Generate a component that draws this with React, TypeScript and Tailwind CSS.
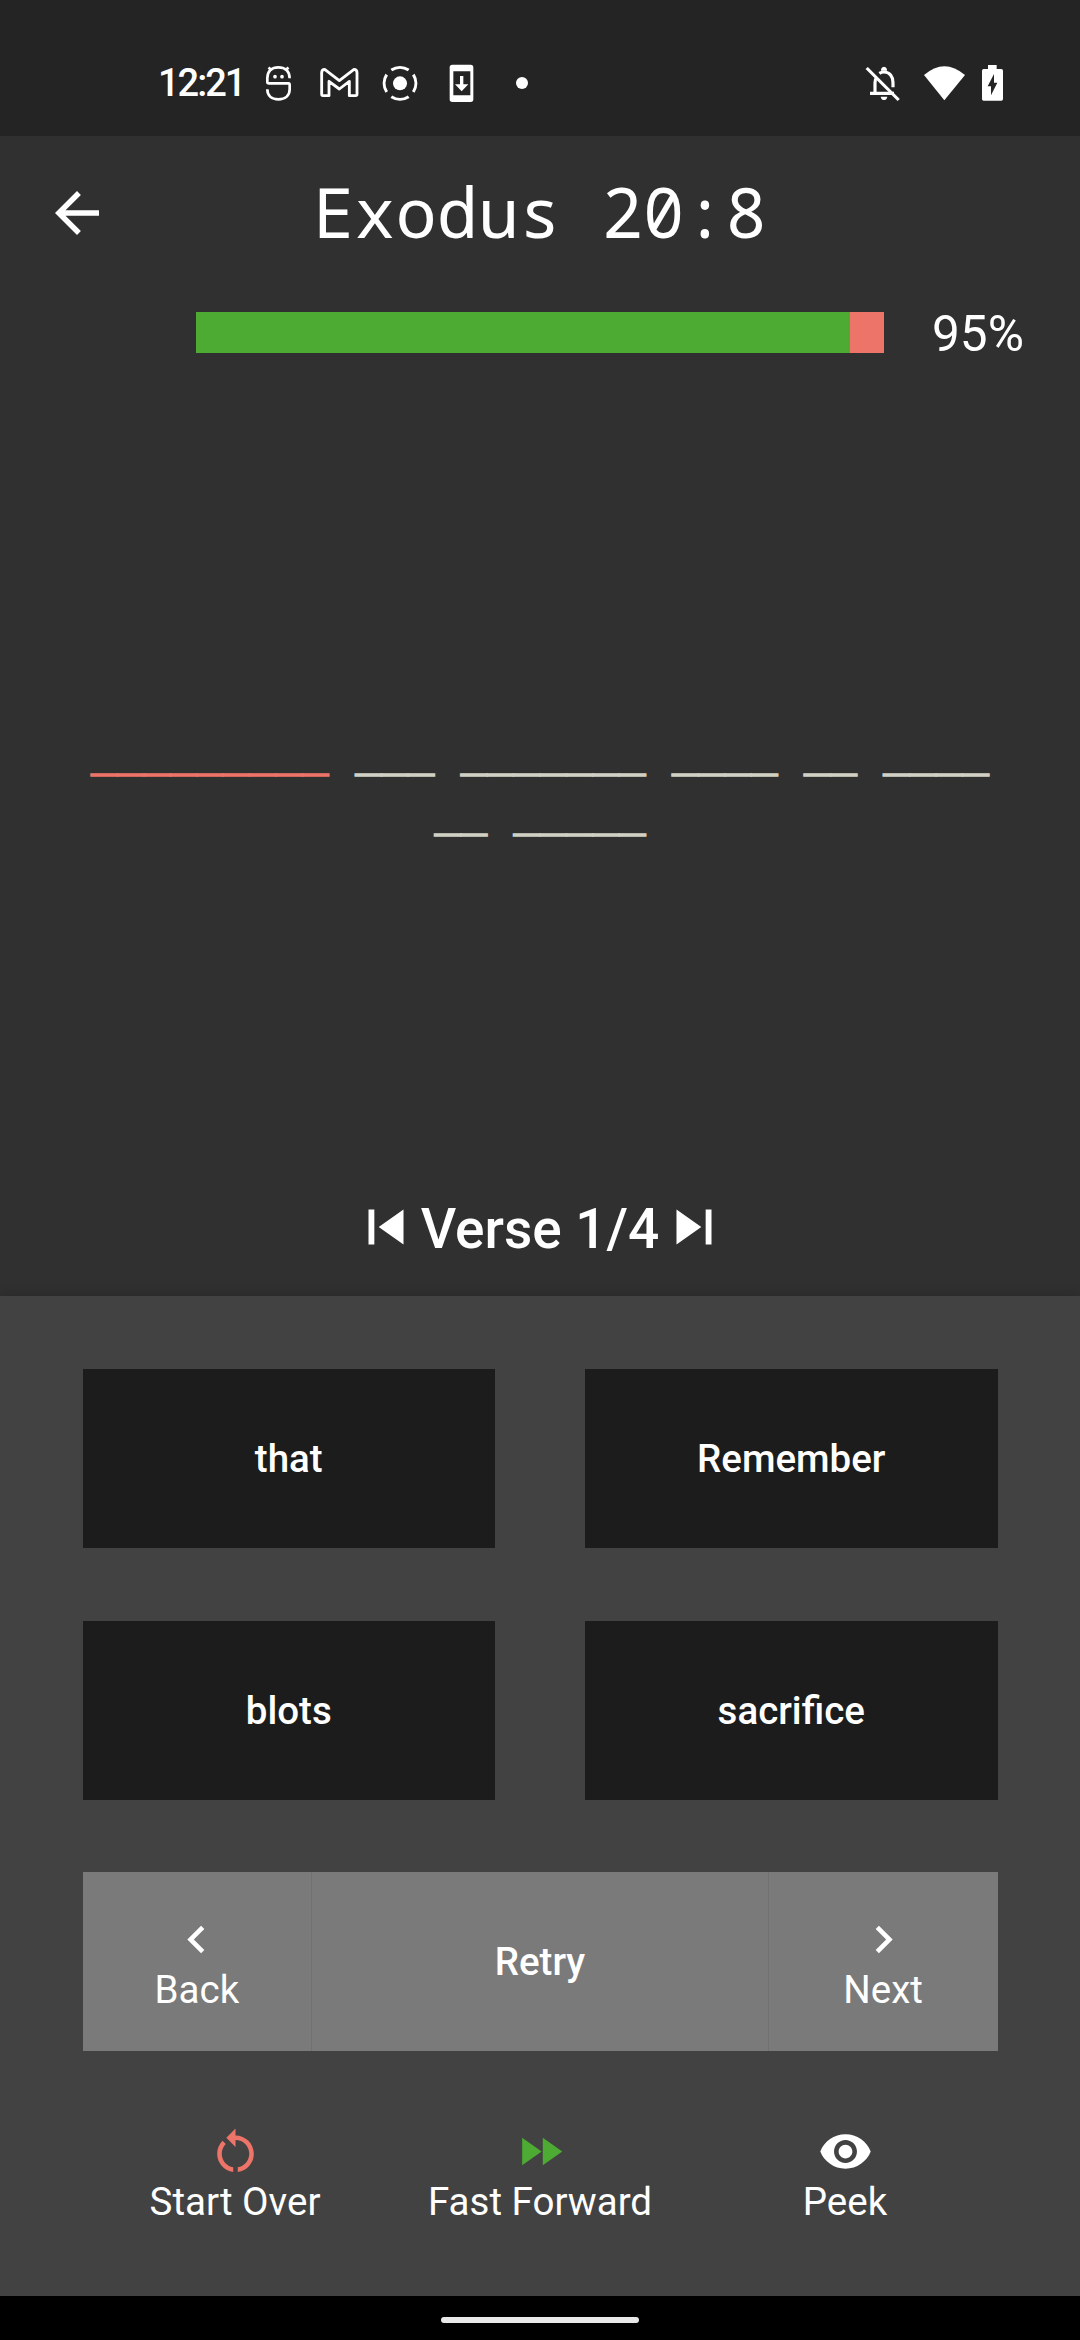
import React from "react";

const FILL = "currentColor";

function Icon({ d, className }: { d: string; className: string }) {
  return (
    <svg viewBox="0 0 24 24" className={className} fill={FILL} aria-hidden="true">
      <path d={d} />
    </svg>
  );
}

const ICONS = {
  back: "M20 11H7.83l5.59-5.59L12 4l-8 8 8 8 1.41-1.41L7.83 13H20v-2z",
  previous: "M6 6h2v12H6zm3.5 6l8.5 6V6z",
  next: "M6 18l8.5-6L6 6v12zM16 6v12h2V6h-2z",
  left: "M15.41 7.41L14 6l-6 6 6 6 1.41-1.41L10.83 12z",
  right: "M10 6L8.59 7.41 13.17 12l-4.58 4.59L10 18l6-6z",
  restart:
    "M12 5V2L8 6l4 4V7c3.31 0 6 2.69 6 6 0 2.97-2.17 5.43-5 5.91v2.02c3.95-.49 7-3.85 7-7.93 0-4.42-3.58-8-8-8zM6 13c0-1.65.67-3.15 1.76-4.24L6.34 7.34C4.9 8.79 4 10.79 4 13c0 4.08 3.05 7.44 7 7.93v-2.02c-2.83-.48-5-2.94-5-5.91z",
  forward: "M4 18l8.5-6L4 6v12zm9-12v12l8.5-6L13 6z",
  eye: "M12 4.5C7 4.5 2.73 7.61 1 12c1.73 4.39 6 7.5 11 7.5s9.27-3.11 11-7.5c-1.73-4.39-6-7.5-11-7.5zM12 17c-2.76 0-5-2.24-5-5s2.24-5 5-5 5 2.24 5 5-2.24 5-5 5zm0-8c-1.66 0-3 1.34-3 3s1.34 3 3 3 3-1.34 3-3-1.34-3-3-3z",
};

function StatusBar() {
  return (
    <header className="flex h-[136px] shrink-0 items-center bg-[#242424] pt-[30px]">
      <span className="ml-[158px] w-[107px] text-[38px] leading-[40px] font-medium tracking-[-2px]">
        12:21
      </span>
      {/* mascot */}
      <svg viewBox="375 75 81 111" className="h-[37px] w-[27px]" fill="none" stroke={FILL} strokeWidth="8">
        <path d="M382 115C382 93 396 82 415 82S449 93 449 115M382 112V126Q382 130 387 130H446Q449 130 449 136V148C449 168 435 178 415 178S382 168 382 148M386 82L394 92M445 82L437 92" />
        <circle cx="405" cy="110" r="5.5" fill={FILL} stroke="none" />
        <circle cx="426" cy="110" r="5.5" fill={FILL} stroke="none" />
      </svg>
      {/* mail */}
      <svg viewBox="537 75 123 111" className="ml-[27px] h-[37px] w-[41px]" fill="none" stroke={FILL} strokeWidth="8.5" strokeLinejoin="round">
        <path d="M545 98Q545 88 554 88L598 122L642 88Q651 88 651 98V163Q651 167 647 167H628V124L598 147L567 124V167H549Q545 167 545 163Z" />
      </svg>
      {/* casting */}
      <svg viewBox="724 75 114 111" className="ml-[21px] h-[37px] w-[38px]" fill="none" stroke={FILL} strokeWidth="9">
        <circle cx="781" cy="130" r="21" fill={FILL} stroke="none" />
        <path d="M755 90A48 48 0 0 1 807 90M821 104A48 48 0 0 1 821 156M807 170A48 48 0 0 1 755 170M741 156A48 48 0 0 1 741 104" />
      </svg>
      {/* download to phone */}
      <svg viewBox="926 72 75 117" className="ml-[30px] h-[39px] w-[25px]" fill={FILL}>
        <path fillRule="evenodd" d="M936 74H991Q999 74 999 82V178Q999 186 991 186H936Q928 186 928 178V82Q928 74 936 74ZM939 94V166H990V94Z" />
        <path d="M959 108H969V133H984L964 154L944 133H959Z" />
      </svg>
      <span className="ml-[42px] h-3 w-3 rounded-full bg-white" />
      {/* muted bell */}
      <svg viewBox="72 75 114 114" className="mt-px ml-auto h-[38px] w-[38px]" fill="none" stroke={FILL} strokeWidth="9.5">
        <path d="M90 160H162M105 157V128Q105 118 110 113M118 100Q124 96 132 96C149 96 159 110 159 128V142" />
        <path d="M123 92V88Q125 80 132 80T141 88V92Z" fill={FILL} stroke="none" />
        <path d="M122 170H142Q140 180 132 180T122 170Z" fill={FILL} stroke="none" />
        <path d="M80 84L176 180" />
      </svg>
      {/* wifi */}
      <svg viewBox="252 75 123 105" className="ml-[22px] h-[35px] w-[41px]" fill={FILL}>
        <path d="M252 102Q313 49 375 102L313 178Z" />
      </svg>
      {/* charging battery */}
      <svg viewBox="426 75 63 108" className="mr-[77px] ml-[17px] h-[36px] w-[21px]" fill={FILL}>
        <path fillRule="evenodd" d="M444 75H470V87H484Q489 87 489 92V177Q489 182 484 182H431Q426 182 426 177V92Q426 87 431 87H444ZM462 102L443 139H453V166L472 128H462Z" />
      </svg>
    </header>
  );
}

const WORD_LENGTHS = [9, 3, 7, 4, 2, 4, 2, 5];

function VerseBlanks() {
  return (
    <p className="mt-[366px] h-[120px] px-[80px] text-center font-['Liberation_Mono',monospace] text-[44px] leading-[60px] text-[#d0d0c4] [-webkit-text-stroke:1.4px_currentColor]">
      {WORD_LENGTHS.map((n, i) => (
        <React.Fragment key={i}>
          <span className={i === 0 ? "text-[#ed7469]" : ""}>{"_".repeat(n)}</span>{" "}
        </React.Fragment>
      ))}
    </p>
  );
}

function WordButton({ children }: { children: string }) {
  return (
    <button className="flex h-[179px] items-center justify-center bg-[#1c1c1c] pt-px text-[38.5px] font-medium">
      {children}
    </button>
  );
}

function Action({ icon, label, tint }: { icon: string; label: string; tint: string }) {
  return (
    <button className="flex flex-col items-center text-[38.5px] leading-[45px]">
      <Icon d={icon} className={`size-[55px] ${tint}`} />
      {label}
    </button>
  );
}

export default function App() {
  return (
    <div className="flex h-[2340px] w-[1080px] flex-col overflow-hidden bg-[#303030] font-[Roboto,sans-serif] text-white">
      <StatusBar />
      <main className="flex h-[1160px] flex-col">
        <div className="flex h-[154px] items-center pl-[44px]">
          <Icon d={ICONS.back} className="size-[66px]" />
          <h1 className="w-[860px] pb-[3px] text-center font-['Noto_Sans_Mono','DejaVu_Sans_Mono',monospace] text-[68.75px] leading-[80px]">
            Exodus 20:8
          </h1>
        </div>
        <div className="mt-[12px] flex h-[61px] items-center pl-[196px]">
          <div className="flex h-[41px] w-[688px] bg-[#ed7469]">
            <div className="w-[654px] bg-[#4dab33]" />
          </div>
          <span className="ml-[48px] pt-[3px] text-[49.5px] leading-[58px]">95%</span>
        </div>
        <VerseBlanks />
        <div className="mt-auto mb-[34px] flex h-[70px] items-center justify-center text-[55px] font-medium">
          <Icon d={ICONS.previous} className="size-[70px] shrink-0" />
          <span className="flex w-[238px] justify-center pt-[4px] leading-[70px] whitespace-nowrap">Verse 1/4</span>
          <Icon d={ICONS.next} className="size-[70px] shrink-0" />
        </div>
      </main>
      <section className="flex h-[1000px] flex-col bg-[#424242] px-[82.5px] pt-[72.5px] shadow-[0_-2px_10px_rgba(0,0,0,0.15)]">
        <div className="grid grid-cols-2 gap-x-[90px] gap-y-[73px]">
          <WordButton>that</WordButton>
          <WordButton>Remember</WordButton>
          <WordButton>blots</WordButton>
          <WordButton>sacrifice</WordButton>
        </div>
        <div className="mt-[72.5px] grid h-[179px] grid-cols-[1fr_2fr_1fr] bg-[#7a7a7a]">
          <button className="flex flex-col items-center pt-[40px] text-[38.5px] leading-[45px]">
            <Icon d={ICONS.left} className="size-[55px]" />
            Back
          </button>
          <button className="border-x border-[#717171] text-[38.5px] font-medium">Retry</button>
          <button className="flex flex-col items-center pt-[40px] text-[38.5px] leading-[45px]">
            <Icon d={ICONS.right} className="size-[55px]" />
            Next
          </button>
        </div>
        <div className="mt-[73px] grid grid-cols-3">
          <Action icon={ICONS.restart} label="Start Over" tint="text-[#ed7469]" />
          <Action icon={ICONS.forward} label="Fast Forward" tint="text-[#4dab33]" />
          <Action icon={ICONS.eye} label="Peek" tint="text-white" />
        </div>
      </section>
      <footer className="flex h-[44px] items-center justify-center bg-black pt-[4px]">
        <span className="h-[6px] w-[198px] rounded-full bg-[#e9e9e9]" />
      </footer>
    </div>
  );
}
